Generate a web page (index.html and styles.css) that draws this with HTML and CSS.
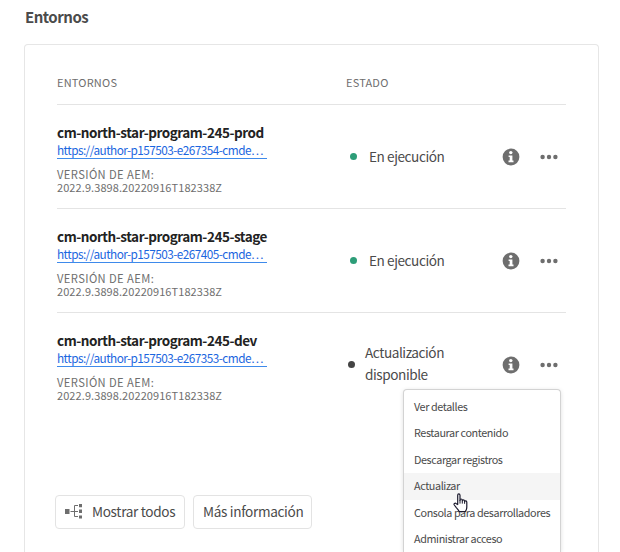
FILE: index.html
```html
<!DOCTYPE html>
<html lang="es">
<head>
<meta charset="utf-8">
<title>Entornos</title>
<link rel="stylesheet" href="styles.css">
</head>
<body>
<svg class="defs" width="0" height="0" aria-hidden="true">
  <symbol id="info" viewBox="0 0 18 18"><circle cx="9" cy="9" r="8.4" fill="#6e6e6e"/><circle cx="8.8" cy="4.6" r="1.7" fill="#fff"/><path d="M6.6 7.4h3.8v5h1.1v1.8H6.5v-1.8h1.2V9.1H6.6z" fill="#fff"/></symbol>
  <symbol id="more" viewBox="0 0 18 6"><g fill="#6e6e6e"><circle cx="2.6" cy="3" r="2.2"/><circle cx="9" cy="3" r="2.2"/><circle cx="15.4" cy="3" r="2.2"/></g></symbol>
</svg>
<h1>Entornos</h1>
<main class="card">
  <div class="row head"><div>ENTORNOS</div><div>ESTADO</div></div>
  <section class="row">
    <div class="env"><h2>cm-north-star-program-245-prod</h2><a href="#">https://author-p157503-e267354-cmde…</a><p class="version"><span>VERSIÓN DE AEM:</span><br>2022.9.3898.20220916T182338Z</p></div>
    <div class="status"><i class="dot"></i><span>En ejecución</span></div>
    <div class="actions"><svg class="info"><use href="#info"/></svg><svg class="more"><use href="#more"/></svg></div>
  </section>
  <section class="row">
    <div class="env"><h2>cm-north-star-program-245-stage</h2><a href="#">https://author-p157503-e267405-cmde…</a><p class="version"><span>VERSIÓN DE AEM:</span><br>2022.9.3898.20220916T182338Z</p></div>
    <div class="status"><i class="dot"></i><span>En ejecución</span></div>
    <div class="actions"><svg class="info"><use href="#info"/></svg><svg class="more"><use href="#more"/></svg></div>
  </section>
  <section class="row last">
    <div class="env"><h2>cm-north-star-program-245-dev</h2><a href="#">https://author-p157503-e267353-cmde…</a><p class="version"><span>VERSIÓN DE AEM:</span><br>2022.9.3898.20220916T182338Z</p></div>
    <div class="status update"><i class="dot"></i><span>Actualización<br>disponible</span></div>
    <div class="actions"><svg class="info"><use href="#info"/></svg><svg class="more"><use href="#more"/></svg></div>
  </section>
  <div class="buttons">
    <button><svg class="tree" viewBox="0 0 18 15"><path d="M0 5h4.5v5H0zM14 0h3v3.2h-3zM14 5.6h3v3.4h-3zM14 11.4h3v3.2h-3z" fill="#6e6e6e"/><path d="M5.5 7.5H13M13 1.5H9.5V12.5H13" fill="none" stroke="#6e6e6e"/></svg><span>Mostrar todos</span></button>
    <button><span>Más información</span></button>
  </div>
</main>
<ul class="menu">
  <li>Ver detalles</li>
  <li>Restaurar contenido</li>
  <li>Descargar registros</li>
  <li class="hover">Actualizar</li>
  <li>Consola para desarrolladores</li>
  <li>Administrar acceso</li>
</ul>
<svg class="cursor" viewBox="0 0 16 20"><path d="M4.7 11.5V2.2Q4.7.8 5.8.8T7 2.2V7.3Q7 6 8.1 6T9.3 7.3V7.8Q9.4 6.8 10.4 6.8T11.6 8V8.6Q11.8 7.8 12.8 7.9T13.8 9.2V14Q13.8 16.5 12.3 18.6H6.2Q5.4 16.9 3.3 14.6L1.3 12Q.6 11 1.5 10.4T3.3 10.7Z" fill="#fff" stroke="#1c1b2e" stroke-width="1.2" stroke-linejoin="round"/><path d="M7 7v3.6M9.3 7.8v2.8M11.6 8.5v2.3" stroke="#1c1b2e" fill="none"/></svg>
</body>
</html>
```
FILE: styles.css
```css
* { box-sizing: border-box; }
html { overflow: hidden; }
body { margin: 0; height: 552px; overflow: hidden; position: relative; background: #fff; color: #4b4b4b; font-family: "Noto Sans CJK SC", "Noto Sans", sans-serif; }
h1, h2, p, ul { margin: 0; padding: 0; }
h1 { height: 44px; padding: 6px 0 0 25px; font-size: 15px; line-height: 22px; font-weight: 700; letter-spacing: -.5px; white-space: nowrap; }
.defs { position: absolute; }
.card { width: 575px; height: 508px; margin-left: 24px; padding: 0 32px; border: 1px solid #e6e6e6; border-bottom: 0; border-radius: 4px 4px 0 0; }
.row { display: grid; grid-template-columns: 289px 152px 68px; height: 104px; border-bottom: 1px solid #e4e4e4; white-space: nowrap; }
.head { height: 60px; padding-top: 28px; font-size: 11px; line-height: 18px; letter-spacing: .2px; color: #6e6e6e; }
.last { border-bottom-color: transparent; }
.env { padding-top: 17px; }
h2 { font-size: 13.5px; line-height: 20px; letter-spacing: -.46px; color: #222; }
.env a { display: block; width: 210px; height: 17px; font-size: 11.8px; line-height: 16px; letter-spacing: -.55px; color: #1b66e0; text-decoration: none; border-bottom: 1px solid #3e8aeb; }
.version { padding-top: 9px; font-size: 11px; line-height: 13px; letter-spacing: .08px; color: #6e6e6e; }
.version span { font-size: 11.2px; letter-spacing: .4px; }
.status { display: flex; align-items: center; gap: 12px; padding-left: 4px; font-size: 13.6px; line-height: 22px; letter-spacing: -.43px; }
.status span { margin-top: -2px; }
.dot { width: 7px; height: 7px; border-radius: 50%; background: #2d9d78; }
.update { padding-left: 2px; gap: 10px; }
.update span { margin-top: -3px; }
.update .dot { background: #444; }
.actions { display: flex; align-items: center; gap: 20px; padding: 0 0 0 4px; }
.info { width: 18px; height: 18px; }
.more { width: 18px; height: 6px; }
.buttons { display: flex; gap: 8px; margin: 78px 0 0 -2px; }
button { display: flex; align-items: center; height: 34px; padding: 0 8px; border: 1px solid #e3e3e3; border-radius: 4px; background: #fff; color: #4b4b4b; font: 13.6px/22px "Noto Sans CJK SC", sans-serif; letter-spacing: -.33px; white-space: nowrap; }
button span { margin-top: -3px; }
button:first-child { width: 130px; gap: 9px; }
button:last-child { width: 119px; padding-left: 9px; }
.tree { width: 18px; height: 15px; flex: none; margin: -1px 0 0 1px; }
.menu { position: absolute; left: 403px; top: 389px; width: 158px; height: 163px; overflow: hidden; padding-top: 3.6px; list-style: none; background: #fff; border: 1px solid #d3d3d3; border-bottom: 0; border-radius: 4px 4px 0 0; box-shadow: 0 1px 4px rgba(0,0,0,.13); font-size: 10.8px; letter-spacing: -.4px; }
.menu li { height: 26.5px; padding-left: 10px; line-height: 24px; white-space: nowrap; }
.menu .hover { background: #f5f5f5; }
.cursor { position: absolute; left: 453px; top: 493px; width: 16px; height: 20px; }
```
